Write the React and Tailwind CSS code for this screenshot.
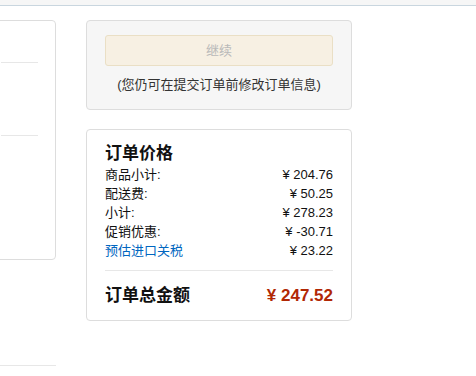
export default function App() {
  const rows = [
    { label: '商品小计:', value: '¥ 204.76' },
    { label: '配送费:', value: '¥ 50.25' },
    { label: '小计:', value: '¥ 278.23' },
    { label: '促销优惠:', value: '¥ -30.71' },
    { label: '预估进口关税', value: '¥ 23.22', link: true },
  ];

  return (
    <div
      className="w-[476px] h-[376px] overflow-hidden bg-white text-[#111]"
      style={{ fontFamily: '"Liberation Sans", Arial, "Noto Sans CJK SC", sans-serif' }}
    >
      {/* top strip */}
      <div className="h-[6px] bg-[#f6f6f6] border-b border-[#c9d6df]" />

      <div className="flex pt-[14px]">
        {/* left column, mostly cut off */}
        <div className="w-[56px] shrink-0 overflow-hidden">
          <div className="-ml-[20px] w-[76px] h-[240px] border border-[#dddddd] rounded-[4px] pt-[41px]">
            <div className="ml-[20px] w-[37px] border-t border-[#e7e7e7]" />
            <div className="ml-[20px] w-[37px] border-t border-[#e7e7e7] mt-[72px]" />
          </div>
          <div className="mt-[105px] border-t border-[#e7e7e7]" />
        </div>

        {/* right column */}
        <div className="ml-[30px] w-[266px] shrink-0">
          <div className="h-[90px] bg-[#f6f6f6] border border-[#dddddd] rounded-[4px] px-[18px] pt-[14px]">
            <div className="h-[31px] bg-[#f7f0e3] border border-[#eadfc5] rounded-[3px] flex items-center justify-center text-[13px] text-[#b9b9b9]">
              继续
            </div>
            <div className="mt-[10px] text-center text-[13px] leading-[17px] text-[#333]">
              (您仍可在提交订单前修改订单信息)
            </div>
          </div>

          <div className="mt-[19px] h-[192px] border border-[#dddddd] rounded-[4px] px-[18px] pt-[13px]">
            <div className="text-[17px] leading-[22px] font-bold">订单价格</div>
            {rows.map((r) => (
              <div key={r.label} className="flex justify-between text-[13px] leading-[19px]">
                <span className={r.link ? 'text-[#0066c0]' : 'text-[#111]'}>{r.label}</span>
                <span className="text-[#111]">{r.value}</span>
              </div>
            ))}
            <div className="mt-[10px] border-t border-[#e7e7e7]" />
            <div className="flex justify-between items-center pt-[14px] text-[17px] leading-[22px] font-bold">
              <span>订单总金额</span>
              <span className="text-[#b12704]">¥ 247.52</span>
            </div>
          </div>
        </div>
      </div>
    </div>
  );
}
